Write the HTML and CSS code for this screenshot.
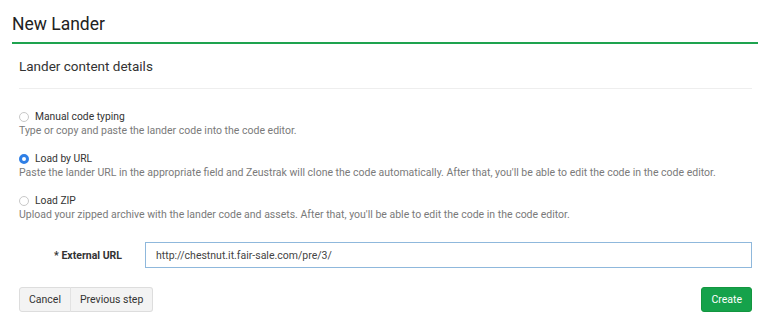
FILE: index.html
```html
<!DOCTYPE html>
<html lang="en">
<head>
  <meta charset="UTF-8" />
  <title>New Lander</title>
  <link rel="stylesheet" href="styles.css">
</head>
<body>
  <div class="page">
    <h1 class="page-title">New Lander</h1>

    <div class="panel">
      <h2 class="panel-title">Lander content details</h2>

      <div class="options">
        <div class="option">
          <label class="radio"><span class="dot"></span>Manual code typing</label>
          <p class="hint">Type or copy and paste the lander code into the code editor.</p>
        </div>
        <div class="option">
          <label class="radio"><span class="dot checked"></span>Load by URL</label>
          <p class="hint">Paste the lander URL in the appropriate field and Zeustrak will clone the code automatically. After that, you'll be able to edit the code in the code editor.</p>
        </div>
        <div class="option">
          <label class="radio"><span class="dot"></span>Load ZIP</label>
          <p class="hint">Upload your zipped archive with the lander code and assets. After that, you'll be able to edit the code in the code editor.</p>
        </div>
      </div>

      <div class="field">
        <label class="field-label" for="url">* External URL</label>
        <input class="field-input" type="text" id="url" value="http://chestnut.it.fair-sale.com/pre/3/" />
      </div>

      <div class="actions">
        <div class="btn-group">
          <button class="btn">Cancel</button>
          <button class="btn">Previous step</button>
        </div>
        <button class="btn btn-primary">Create</button>
      </div>
    </div>
  </div>
</body>
</html>
```

FILE: styles.css
```css
body {
  margin: 0;
  font-family: Roboto, "Liberation Sans", sans-serif;
  background: #fff;
  color: #333;
}

.page {
  padding: 12px 25px 0 12px;
}

.page-title {
  margin: 0;
  font-size: 17.5px;
  font-weight: 400;
  line-height: 24px;
  color: #222;
  padding-bottom: 6px;
  border-bottom: 2px solid #1ea34f;
}

.panel {
  padding: 0 6px 0 7px;
}

.panel-title {
  margin: 0;
  font-size: 13.5px;
  font-weight: 400;
  color: #333;
  line-height: 18px;
  padding: 13px 0;
  border-bottom: 1px solid #eee;
}

.options {
  padding-top: 21px;
}

.option {
  margin-bottom: 14px;
}

.radio {
  display: flex;
  align-items: center;
  font-size: 10.3px;
  line-height: 14px;
  color: #333;
}

.dot {
  width: 8px;
  height: 8px;
  border: 1px solid #c8c8c8;
  border-radius: 50%;
  margin-right: 6px;
  box-sizing: content-box;
  background: #fff;
}

.dot.checked {
  width: 4px;
  height: 4px;
  border: 3px solid #2f7fe6;
}

.hint {
  margin: 0;
  font-size: 10.5px;
  line-height: 14px;
  color: #7a7a7a;
}

.field {
  display: flex;
  align-items: center;
  margin-top: 20px;
}

.field-label {
  width: 103px;
  text-align: right;
  font-size: 10.5px;
  font-weight: 700;
  color: #333;
  padding-right: 23px;
}

.field-input {
  flex: 1;
  height: 26px;
  box-sizing: border-box;
  border: 1px solid #8fb8dc;
  padding: 0 10px;
  font-family: inherit;
  font-size: 10.5px;
  color: #444;
  outline: none;
}

.actions {
  display: flex;
  justify-content: space-between;
  margin-top: 19px;
}

.btn-group {
  display: flex;
}

.btn {
  height: 25px;
  padding: 0 9px;
  font-family: inherit;
  font-size: 10.5px;
  color: #333;
  background: #f3f3f3;
  border: 1px solid #ddd;
  border-radius: 3px;
}

.btn-group .btn:first-child {
  border-radius: 3px 0 0 3px;
}

.btn-group .btn + .btn {
  border-left: 1px solid #e2e2e2;
  border-radius: 0 3px 3px 0;
  margin-left: -1px;
}

.btn-primary {
  background: #15a24b;
  border-color: #13963f;
  color: #fff;
}
```
